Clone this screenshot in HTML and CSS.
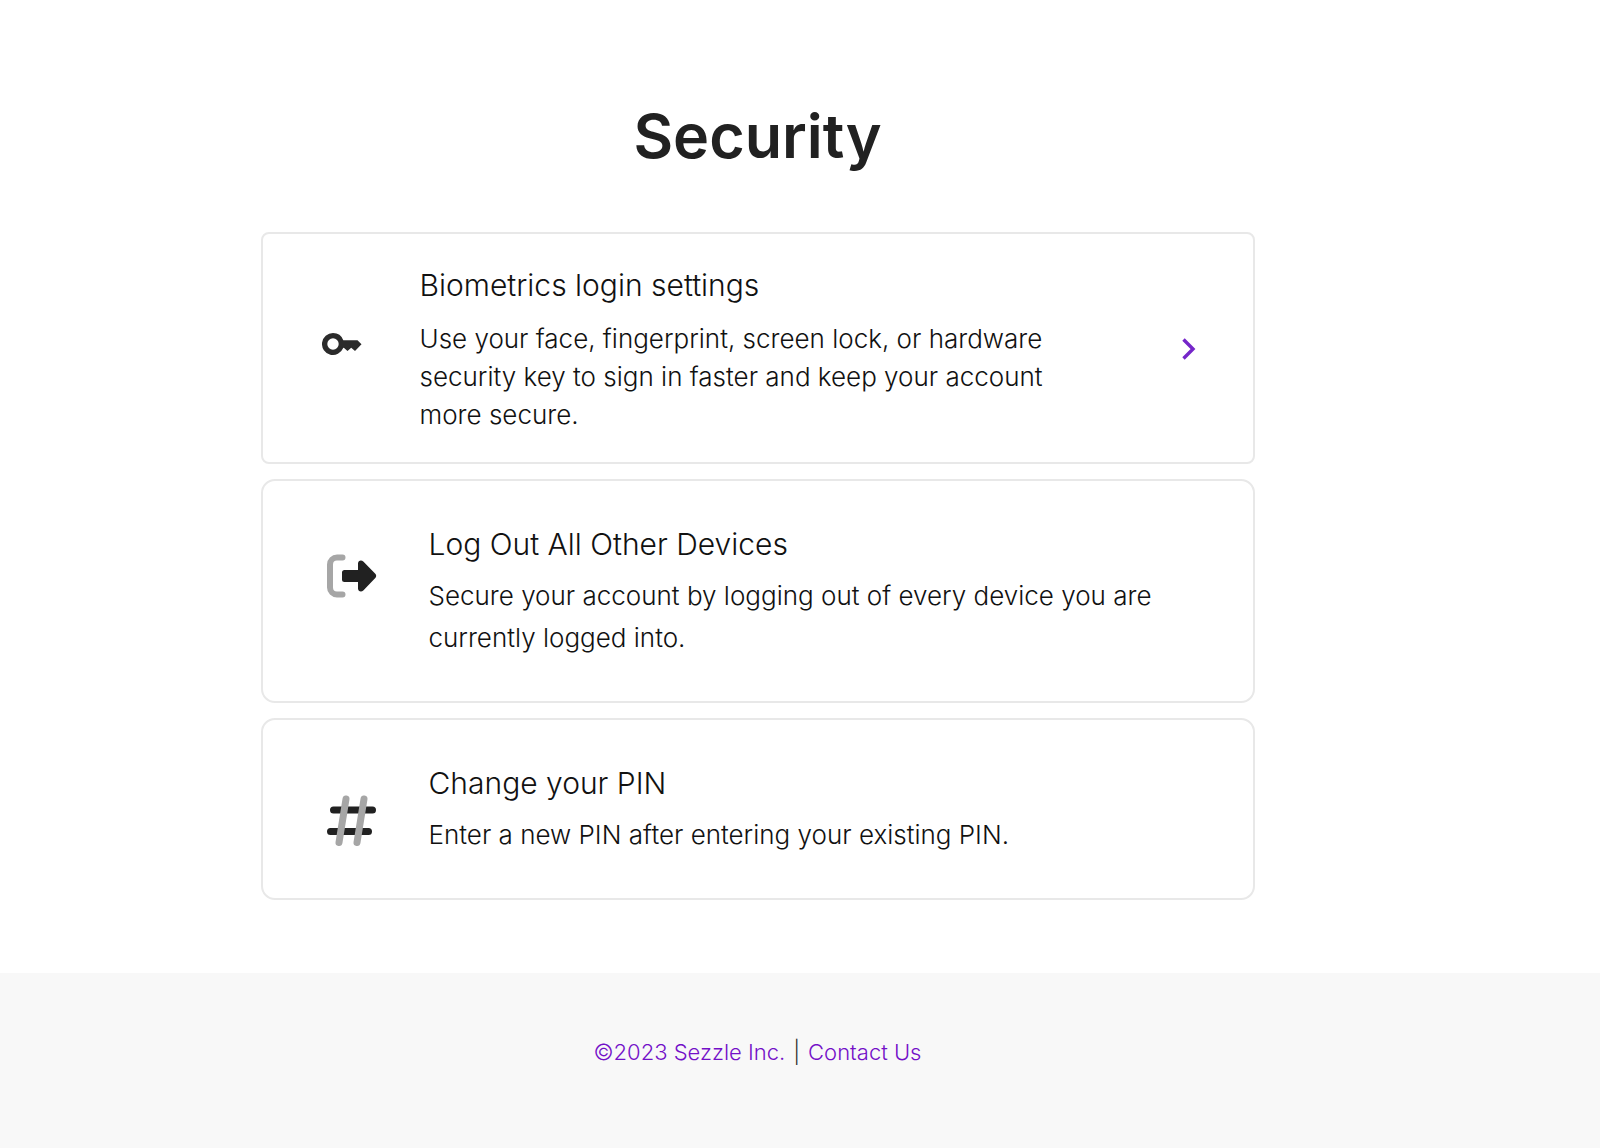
FILE: index.html
```html
<!DOCTYPE html>
<html lang="en">
<head>
    <meta charset="UTF-8">
    <meta name="viewport" content="width=device-width, initial-scale=1.0">
    <title>Security</title>
    <link rel="stylesheet" href="styles.css">
</head>
<body>
    <main class="page">
        <h1>Security</h1>

        <div class="cards">
            <button type="button" class="card card-link">
                <svg class="icon icon-key" viewBox="0 0 40 34" aria-hidden="true">
                    <path fill="#2b2b2b" fill-rule="evenodd" d="M11 0a11 11 0 0 1 10.300 7.200H35.500l4 4L33 18l-3.800-3.300L25.500 18l-3.700-3.300-.6.400A11 11 0 1 1 11 0zm0 5.300a5.700 5.700 0 1 0 0 11.400 5.700 5.700 0 0 0 0-11.400z"/>
                </svg>
                <span class="card-text">
                    <span class="card-title">Biometrics login settings</span>
                    <span class="card-desc">Use your face, fingerprint, screen lock, or hardware security key to sign in faster and keep your account more secure.</span>
                </span>
                <svg class="chevron" viewBox="0 0 14 24" aria-hidden="true">
                    <path fill="none" stroke="#7526c9" stroke-width="3.400" d="M1.500 1.500 11 11l-9.500 9.500"/>
                </svg>
            </button>

            <button type="button" class="card">
                <svg class="icon" viewBox="0 -4 50 62" aria-hidden="true">
                    <path fill="none" stroke="#a6a6a6" stroke-width="6" stroke-linecap="round" stroke-linejoin="round" d="M15.500 7.500H10a7 7 0 0 0-7 7v23a7 7 0 0 0 7 7h5.500"/>
                    <path fill="#212121" d="M17.500 20H31v-6.500c0-3 3.300-4 5.300-2l12 12.300c1.200 1.300 1.200 3 0 4.300l-12 12.300c-2 2-5.300 1-5.300-2V32H17.500a2.500 2.500 0 0 1-2.500-2.500v-7a2.500 2.500 0 0 1 2.500-2.500z"/>
                </svg>
                <span class="card-text">
                    <span class="card-title">Log Out All Other Devices</span>
                    <span class="card-desc">Secure your account by logging out of every device you are currently logged into.</span>
                </span>
            </button>

            <button type="button" class="card">
                <svg class="icon" viewBox="0 -10 50 62" aria-hidden="true">
                    <g fill="none" stroke-width="7" stroke-linecap="round">
                        <path stroke="#212121" d="M6.500 15H45.500M3.500 36.500H41.500"/>
                        <path stroke="#a6a6a6" d="M19 4 12 47.500M37 4l-7 43.500"/>
                    </g>
                </svg>
                <span class="card-text">
                    <span class="card-title">Change your PIN</span>
                    <span class="card-desc">Enter a new PIN after entering your existing PIN.</span>
                </span>
            </button>
        </div>
    </main>

    <footer class="footer">
        <a href="#">©2023 Sezzle Inc.</a>
        <span class="divider">|</span>
        <a href="#">Contact Us</a>
    </footer>
</body>
</html>
```

FILE: styles.css
```css
* {
    box-sizing: border-box;
}
body {
    display: flex;
    flex-direction: column;
    min-height: 100vh;
    margin: 0;
    font-family: Inter, "Liberation Sans", sans-serif;
    font-weight: 300;
    color: #111;
    background: #fff;
}
.page,
.footer {
    padding-left: 20px;
    padding-right: 105px;
}
.page {
    padding-top: 96px;
    padding-bottom: 73px;
}
h1 {
    margin: 0 0 56px;
    font-size: 61px;
    line-height: 80px;
    font-weight: 600;
    text-align: center;
    color: #212121;
}
.cards {
    display: flex;
    flex-direction: column;
    gap: 15px;
    max-width: 994px;
    margin: 0 auto;
}
.card {
    display: flex;
    align-items: flex-start;
    gap: 52px;
    width: 100%;
    padding: 43px 64px 42px;
    border: 2px solid #e8e8e8;
    border-radius: 14px;
    background: #fff;
    font: inherit;
    color: inherit;
    text-align: left;
    cursor: pointer;
}
.card:hover {
    border-color: #7526c9;
}
.card-link {
    align-items: center;
    gap: 58px;
    padding: 31px 57px 28px 59px;
    border-radius: 8px;
}
.icon {
    flex: none;
    width: 50px;
    height: 62px;
    margin-top: 22px;
}
.icon-key {
    width: 40px;
    height: 34px;
    margin-top: 0;
}
.chevron {
    flex: none;
    width: 14px;
    height: 24px;
    margin-left: auto;
}
.card-text {
    display: flex;
    flex-direction: column;
    gap: 11px;
}
.card-link .card-text {
    gap: 15px;
    max-width: 640px;
}
.card-title {
    font-size: 30px;
    line-height: 40px;
}
.card-desc {
    font-size: 26px;
    line-height: 42px;
}
.card-link .card-desc {
    line-height: 38px;
}
.footer {
    flex: 1;
    display: flex;
    justify-content: center;
    gap: 8px;
    padding-top: 64px;
    padding-bottom: 64px;
    background: #f8f8f8;
    font-size: 22px;
    line-height: 30px;
}
.footer a {
    color: #7410c8;
    text-decoration: none;
}
.footer a:hover {
    text-decoration: underline;
}
.divider {
    color: #333;
}
```
